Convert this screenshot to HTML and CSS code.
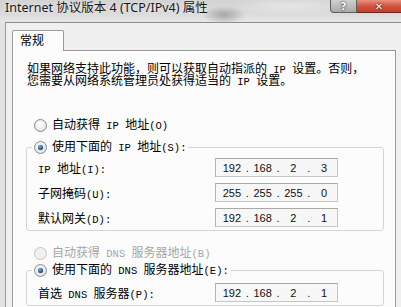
FILE: index.html
```html
<!DOCTYPE html>
<html lang="zh-CN">
<head>
<meta charset="utf-8">
<title>Internet 协议版本 4 (TCP/IPv4) 属性</title>
<link rel="stylesheet" href="styles.css">
</head>
<body>
<div class="win">
  <div class="titlebar">
    <span class="title">Internet 协议版本 4 (TCP/IPv4) 属性</span>
    <div class="caption-btns">
      <span class="cbtn help">?</span>
      <span class="cbtn close">✕</span>
    </div>
  </div>
  <div class="client">
    <div class="tabs"><div class="tab">常规</div></div>
    <div class="panel">
      <div class="intro">
        <div class="line">如果网络支持此功能，则可以获取自动指派的<span class="lat"> IP </span>设置。否则，</div>
        <div class="line">您需要从网络系统管理员处获得适当的<span class="lat"> IP </span>设置。</div>
      </div>
      <label class="radio first"><span class="rb"></span><span>自动获得<span class="lat"> IP </span>地址<span class="lat">(O)</span></span></label>
      <fieldset class="group">
        <legend><label class="radio on"><span class="rb"></span><span>使用下面的<span class="lat"> IP </span>地址<span class="lat">(S):</span></span></label></legend>
        <div class="rows">
          <div class="row"><span><span class="lat">IP </span>地址<span class="lat">(I):</span></span><div class="ip"><span>192</span><i>.</i><span>168</span><i>.</i><span>2</span><i>.</i><span>3</span></div></div>
          <div class="row"><span>子网掩码<span class="lat">(U):</span></span><div class="ip"><span>255</span><i>.</i><span>255</span><i>.</i><span>255</span><i>.</i><span>0</span></div></div>
          <div class="row"><span>默认网关<span class="lat">(D):</span></span><div class="ip"><span>192</span><i>.</i><span>168</span><i>.</i><span>2</span><i>.</i><span>1</span></div></div>
        </div>
      </fieldset>
      <label class="radio dis dns-auto"><span class="rb"></span><span>自动获得<span class="lat"> DNS </span>服务器地址<span class="lat">(B)</span></span></label>
      <fieldset class="group dns">
        <legend><label class="radio on"><span class="rb"></span><span>使用下面的<span class="lat"> DNS </span>服务器地址<span class="lat">(E):</span></span></label></legend>
        <div class="rows">
          <div class="row"><span>首选<span class="lat"> DNS </span>服务器<span class="lat">(P):</span></span><div class="ip"><span>192</span><i>.</i><span>168</span><i>.</i><span>2</span><i>.</i><span>1</span></div></div>
        </div>
      </fieldset>
    </div>
  </div>
</div>
</body>
</html>
```
FILE: styles.css
```css
html, body {
  margin: 0;
  height: 100%;
  overflow: hidden;
}
body {
  background: #e2e2e2;
  font-family: "Noto Sans CJK SC", sans-serif;
  font-size: 12px;
  color: #000;
}
.win {
  height: 307px;
  display: flex;
  flex-direction: column;
}
.titlebar {
  height: 22px;
  flex: none;
  display: flex;
  justify-content: space-between;
  align-items: flex-start;
  background:
    radial-gradient(ellipse 22px 9px at 224px 15px, rgba(120,120,120,0.55), rgba(120,120,120,0) 100%),
    radial-gradient(ellipse 60px 10px at 290px 6px, rgba(240,240,240,0.6), rgba(240,240,240,0) 100%),
    linear-gradient(#d3d3d3, #dadada 60%, #e6e6e6);
}
.title {
  font-family: "Noto Sans", "Noto Sans CJK SC", sans-serif;
  font-size: 12.5px;
  line-height: 16px;
  padding-left: 5px;
  color: #1a1a1a;
  text-shadow: 0 0 4px rgba(255,255,255,0.7);
  white-space: nowrap;
}
.caption-btns {
  display: flex;
}
.cbtn {
  height: 13px;
  box-sizing: border-box;
  display: flex;
  align-items: center;
  justify-content: center;
  font-family: "DejaVu Sans", sans-serif;
  font-weight: bold;
  color: #fff;
  line-height: 13px;
}
.help {
  width: 27px;
  border: 1px solid #5f5f5f;
  border-top: none;
  border-radius: 0 0 0 4px;
  background: linear-gradient(#d0d0d0, #a9a9a9);
  font-size: 11px;
  text-shadow: 0 0 2px #333, 0 0 1px #333;
}
.close {
  width: 44px;
  border-bottom: 1px solid #6a2418;
  background: linear-gradient(#e8927f, #d0503a 55%, #c2432c);
  font-size: 10px;
  text-shadow: 0 0 2px #5a1a10, 0 0 1px #5a1a10;
}
.client {
  flex: 1;
  display: flex;
  flex-direction: column;
  margin-left: 5px;
  border-top: 1px solid #8c8c8c;
  border-left: 1px solid #9a9a9a;
  background: #f0f0f0;
  padding: 7px 5px 0 6px;
  min-height: 0;
}
.tabs {
  display: flex;
}
.tab {
  width: 43px;
  height: 20px;
  padding-left: 7px;
  border: 1px solid #9a9a9a;
  border-bottom: none;
  border-radius: 2px 2px 0 0;
  background: #fcfcfc;
  line-height: 17px;
  position: relative;
  z-index: 1;
  margin-bottom: -1px;
}
.panel {
  flex: 1;
  border: 1px solid #9a9a9a;
  border-bottom: none;
  background: #fcfcfc;
  padding: 0 0 0 14px;
  min-height: 0;
  overflow: hidden;
}
.lat {
  font-family: "Liberation Mono", monospace;
  font-size: 10.5px;
  white-space: pre;
}
.intro {
  padding-top: 11px;
  white-space: nowrap;
}
.line {
  height: 12px;
  line-height: 12px;
}
.radio {
  display: flex;
  align-items: center;
  gap: 5px;
  height: 14px;
  line-height: 14px;
  white-space: nowrap;
}
.radio.first {
  margin: 32px 0 0 7px;
}
.rb {
  flex: none;
  width: 13px;
  height: 13px;
  box-sizing: border-box;
  border-radius: 50%;
  border: 1px solid #8a8a8a;
  background: radial-gradient(circle at 45% 40%, #ffffff, #ececec 55%, #cfcfcf);
  display: flex;
  align-items: center;
  justify-content: center;
}
.on .rb::after {
  content: "";
  width: 5px;
  height: 5px;
  border-radius: 50%;
  background: radial-gradient(circle at 40% 35%, #7fb2de, #245a88 55%, #0d2a45);
  box-shadow: 0 0 1px #2d6aa0;
}
.dis {
  color: #a6a6a6;
}
.dis .rb {
  border-color: #c4c4c4;
  background: #f1f1f1;
}
.group {
  margin: 8px 11px 0 -1px;
  padding: 0 0 3px 0;
  border: 1px solid #d5d5d5;
  border-radius: 3px;
  min-width: 0;
}
.group legend {
  margin-left: 5px;
  padding: 0 2px;
  background: #fcfcfc;
}
.rows {
  display: flex;
  flex-direction: column;
  gap: 6px;
  padding: 4px 0 0 11px;
}
.dns .rows {
  padding-top: 6px;
}
.dns-auto {
  margin: 15px 0 0 7px;
}
.group.dns {
  margin-top: 3px;
}
.row {
  display: grid;
  grid-template-columns: 177px 123px;
  align-items: center;
  height: 19px;
  white-space: nowrap;
}
.ip {
  height: 19px;
  box-sizing: border-box;
  border: 1px solid #c6c6c6;
  border-top-color: #a8a8a8;
  border-left-color: #b4b4b4;
  background: #f7f7f7;
  display: flex;
  align-items: center;
  padding-left: 3px;
  font-family: "Liberation Sans", sans-serif;
  font-size: 11px;
  color: #111;
}
.ip span {
  width: 26px;
  text-align: center;
}
.ip i {
  width: 5px;
  font-style: normal;
  text-align: center;
}
```
